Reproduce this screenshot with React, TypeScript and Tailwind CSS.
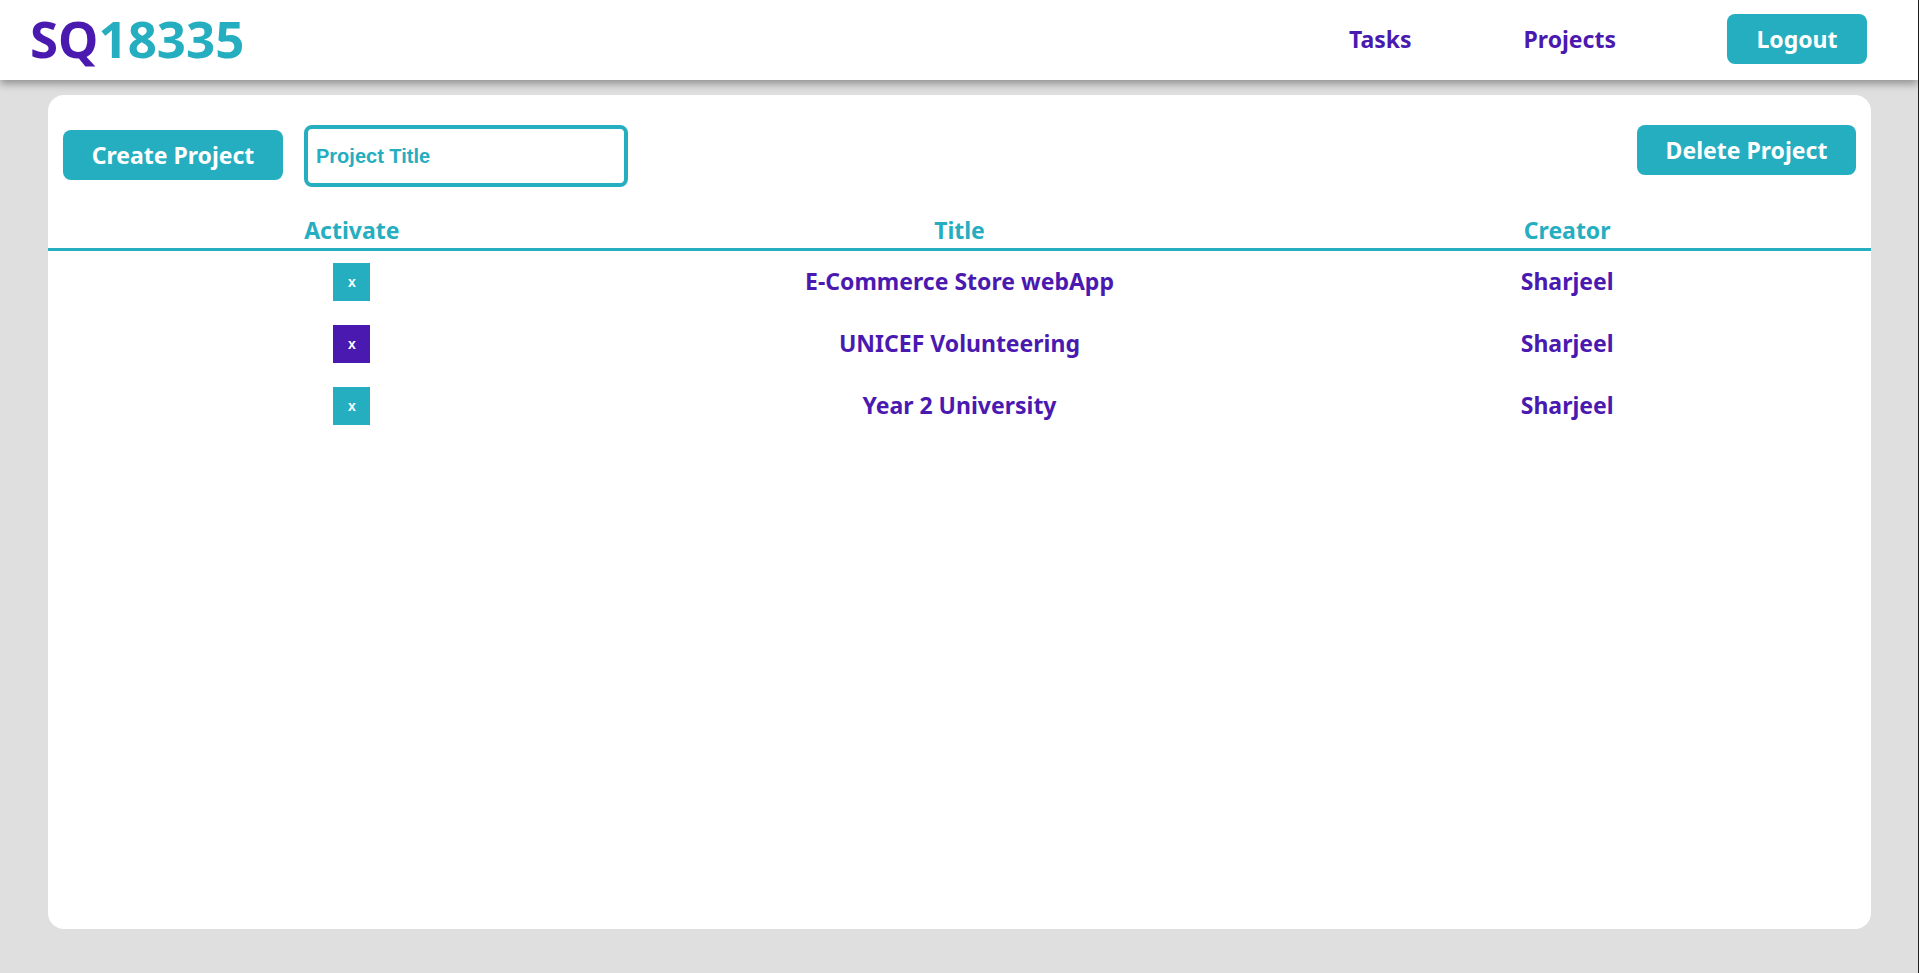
export default function App() {
  const rows = [
    { title: "E-Commerce Store webApp", active: false },
    { title: "UNICEF Volunteering", active: true },
    { title: "Year 2 University", active: false },
  ];
  const font = "font-['Noto_Sans',sans-serif] font-bold";
  return (
    <div className="min-h-[973px] bg-[#dfdfdf] flex flex-col border-r border-[#222222]">
      <header className={`relative z-10 h-20 bg-white shadow-[0_4px_8px_rgba(0,0,0,0.35)] flex items-center pl-[30px] pr-[51px] ${font}`}>
        <div className="text-[51px] leading-none -mt-[4px]">
          <span className="text-[#4a19b0]">SQ</span>
          <span className="text-[#25aec0]">18335</span>
        </div>
        <nav className="ml-auto flex items-center text-[23px] text-[#4a19b0] -mt-[2px]">
          <a className="mr-[112px]">Tasks</a>
          <a className="mr-[111px]">Projects</a>
          <button className="w-[140px] h-[50px] rounded-lg bg-[#25aec0] text-white text-[23px] font-bold">Logout</button>
        </nav>
      </header>
      <main className={`mx-12 mt-[15px] h-[834px] w-[1823px] rounded-2xl bg-white ${font}`}>
        <div className="h-[123px] flex items-start pl-[15px] pr-[15px] pt-[30px]">
          <button className="mt-[5px] w-[220px] h-[50px] rounded-lg bg-[#25aec0] text-white text-[23px] font-bold">Create Project</button>
          <input
            placeholder="Project Title"
            className="ml-[21px] w-[324px] h-[62px] rounded-lg border-[4px] border-[#25aec0] pl-[8px] bg-white outline-none font-['Liberation_Sans',sans-serif] font-bold text-[20px] text-[#25aec0] placeholder:text-[#25aec0]"
          />
          <button className="ml-auto w-[219px] h-[50px] rounded-lg bg-[#25aec0] text-white text-[23px] font-bold">Delete Project</button>
        </div>
        <div className="grid grid-cols-3 h-[33px] border-b-[3px] border-[#25aec0] text-center text-[23px] leading-[25px] text-[#25aec0]">
          <div>Activate</div>
          <div>Title</div>
          <div>Creator</div>
        </div>
        <div className="pt-3 flex flex-col gap-6">
          {rows.map((r) => (
            <div key={r.title} className="grid grid-cols-3 items-center h-[38px] text-center text-[23px] text-[#4a19b0]">
              <div className="flex justify-center">
                <button className={`w-[37px] h-[38px] text-white text-[14px] font-['Liberation_Sans',sans-serif] font-bold ${r.active ? "bg-[#4a19b0]" : "bg-[#25aec0]"}`}>x</button>
              </div>
              <div className="pb-[2px]">{r.title}</div>
              <div className="pb-[2px]">Sharjeel</div>
            </div>
          ))}
        </div>
      </main>
    </div>
  );
}
